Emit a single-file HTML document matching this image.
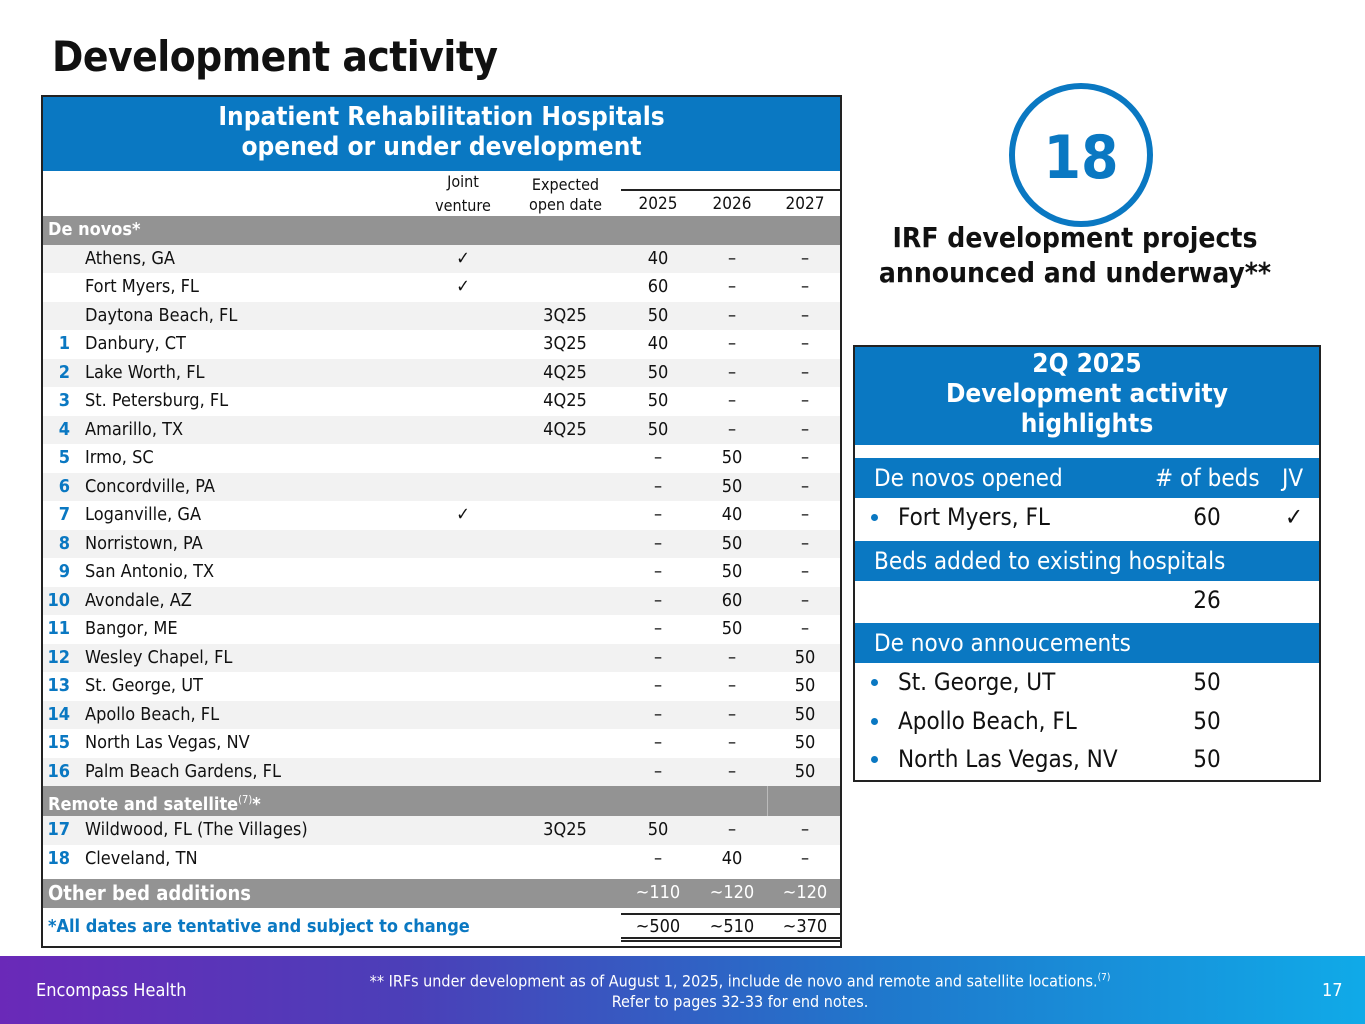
<!DOCTYPE html>
<html><head><meta charset="utf-8"><style>
*{margin:0;padding:0;box-sizing:border-box}
body{width:1365px;height:1024px;position:relative;background:#fff;font-family:"DejaVu Sans Condensed","DejaVu Sans","Liberation Sans",sans-serif;color:#111;overflow:hidden}
.a{position:absolute}
.title{left:52px;top:32px;font-size:42px;font-weight:bold;letter-spacing:-0.5px}
.tbl{left:41px;top:95px;width:801px;height:853px;border:2px solid #222;border-top-width:2px}
.hdr{left:0;top:0;width:797px;height:74px;background:#0a78c2;color:#fff;font-size:26px;font-weight:bold;text-align:center;line-height:30px;padding-top:5px}
.row{position:absolute;left:0;width:797px;height:28.5px;font-size:18px;line-height:28px}
.g{background:#f2f2f2}
.sec{background:#939393;color:#fff;font-weight:bold}
.row span{position:absolute;top:0}
.n{left:0;width:27px;text-align:right;color:#0a78c2;font-weight:bold}
.nm{left:42px}
.jv{left:400px;width:40px;text-align:center}
.dt{left:482px;width:80px;text-align:center}
.c1{left:585px;width:60px;text-align:center}
.c2{left:659px;width:60px;text-align:center}
.c3{left:732px;width:60px;text-align:center}
.ch{font-size:16px;text-align:center;line-height:20px}
.rp{left:853px;top:345px;width:468px;height:437px;border:2px solid #222}
.rh{left:0;top:0;width:464px;height:98px;background:#0a78c2;color:#fff;font-size:26px;font-weight:bold;text-align:center;line-height:30px;padding-top:2px}
.rb{position:absolute;left:0;width:464px;background:#0a78c2;color:#fff;font-size:24px;height:40px;line-height:40px;padding-left:19px}
.rw{position:absolute;left:0;width:464px;font-size:24px;height:39px;line-height:39px}
.rw .b{position:absolute;left:16px;top:16px;width:7px;height:7px;border-radius:50%;background:#0a78c2}
.rw .t{position:absolute;left:43px}
.rw .v{position:absolute;left:330px;width:44px;text-align:center}
.foot{left:0;top:956px;width:1365px;height:68px;background:linear-gradient(90deg,#6a29b8 0%,#4b3fb8 30%,#1f78cc 65%,#10aae8 100%);color:#fff}
</style></head><body>
<div class="a title">Development activity</div>
<div class="a tbl">
 <div class="a hdr">Inpatient Rehabilitation Hospitals<br>opened or under development</div>
 <div class="a ch" style="left:385px;top:75px;width:70px">Joint<br><span style="line-height:28px">venture</span></div>
 <div class="a ch" style="left:475px;top:78px;width:95px">Expected<br>open date</div>
 <div class="a" style="left:578px;top:92px;width:219px;border-top:2px solid #222"></div>
 <div class="a ch" style="left:585px;top:97px;width:60px;font-size:17px">2025</div>
 <div class="a ch" style="left:659px;top:97px;width:60px;font-size:17px">2026</div>
 <div class="a ch" style="left:732px;top:97px;width:60px;font-size:17px">2027</div>
 <div class="row sec" style="top:119px"><span style="left:5px">De novos*</span></div>
 <div class="row g" style="top:147.5px"><span class="nm">Athens, GA</span><span class="jv">✓</span><span class="c1">40</span><span class="c2">–</span><span class="c3">–</span></div>
 <div class="row" style="top:176px"><span class="nm">Fort Myers, FL</span><span class="jv">✓</span><span class="c1">60</span><span class="c2">–</span><span class="c3">–</span></div>
 <div class="row g" style="top:204.5px"><span class="nm">Daytona Beach, FL</span><span class="dt">3Q25</span><span class="c1">50</span><span class="c2">–</span><span class="c3">–</span></div>
 <div class="row" style="top:233px"><span class="n">1</span><span class="nm">Danbury, CT</span><span class="dt">3Q25</span><span class="c1">40</span><span class="c2">–</span><span class="c3">–</span></div>
 <div class="row g" style="top:261.5px"><span class="n">2</span><span class="nm">Lake Worth, FL</span><span class="dt">4Q25</span><span class="c1">50</span><span class="c2">–</span><span class="c3">–</span></div>
 <div class="row" style="top:290px"><span class="n">3</span><span class="nm">St. Petersburg, FL</span><span class="dt">4Q25</span><span class="c1">50</span><span class="c2">–</span><span class="c3">–</span></div>
 <div class="row g" style="top:318.5px"><span class="n">4</span><span class="nm">Amarillo, TX</span><span class="dt">4Q25</span><span class="c1">50</span><span class="c2">–</span><span class="c3">–</span></div>
 <div class="row" style="top:347px"><span class="n">5</span><span class="nm">Irmo, SC</span><span class="c1">–</span><span class="c2">50</span><span class="c3">–</span></div>
 <div class="row g" style="top:375.5px"><span class="n">6</span><span class="nm">Concordville, PA</span><span class="c1">–</span><span class="c2">50</span><span class="c3">–</span></div>
 <div class="row" style="top:404px"><span class="n">7</span><span class="nm">Loganville, GA</span><span class="jv">✓</span><span class="c1">–</span><span class="c2">40</span><span class="c3">–</span></div>
 <div class="row g" style="top:432.5px"><span class="n">8</span><span class="nm">Norristown, PA</span><span class="c1">–</span><span class="c2">50</span><span class="c3">–</span></div>
 <div class="row" style="top:461px"><span class="n">9</span><span class="nm">San Antonio, TX</span><span class="c1">–</span><span class="c2">50</span><span class="c3">–</span></div>
 <div class="row g" style="top:489.5px"><span class="n">10</span><span class="nm">Avondale, AZ</span><span class="c1">–</span><span class="c2">60</span><span class="c3">–</span></div>
 <div class="row" style="top:518px"><span class="n">11</span><span class="nm">Bangor, ME</span><span class="c1">–</span><span class="c2">50</span><span class="c3">–</span></div>
 <div class="row g" style="top:546.5px"><span class="n">12</span><span class="nm">Wesley Chapel, FL</span><span class="c1">–</span><span class="c2">–</span><span class="c3">50</span></div>
 <div class="row" style="top:575px"><span class="n">13</span><span class="nm">St. George, UT</span><span class="c1">–</span><span class="c2">–</span><span class="c3">50</span></div>
 <div class="row g" style="top:603.5px"><span class="n">14</span><span class="nm">Apollo Beach, FL</span><span class="c1">–</span><span class="c2">–</span><span class="c3">50</span></div>
 <div class="row" style="top:632px"><span class="n">15</span><span class="nm">North Las Vegas, NV</span><span class="c1">–</span><span class="c2">–</span><span class="c3">50</span></div>
 <div class="row g" style="top:660.5px"><span class="n">16</span><span class="nm">Palm Beach Gardens, FL</span><span class="c1">–</span><span class="c2">–</span><span class="c3">50</span></div>
 <div class="row sec" style="top:689px;height:30px"><span style="left:5px">Remote and satellite<sup style="font-size:11px;font-weight:normal">(7)</sup>*</span><span style="left:724px;top:0;height:30px;border-left:1px solid #bbb"></span></div>
 <div class="row g" style="top:719px"><span class="n">17</span><span class="nm">Wildwood, FL (The Villages)</span><span class="dt">3Q25</span><span class="c1">50</span><span class="c2">–</span><span class="c3">–</span></div>
 <div class="row" style="top:748px"><span class="n">18</span><span class="nm">Cleveland, TN</span><span class="c1">–</span><span class="c2">40</span><span class="c3">–</span></div>
 <div class="row sec" style="top:782px;height:29px;font-size:20px"><span style="left:5px">Other bed additions</span><span class="c1" style="font-weight:normal;font-size:18px">~110</span><span class="c2" style="font-weight:normal;font-size:18px">~120</span><span class="c3" style="font-weight:normal;font-size:18px">~120</span></div>
 <div class="a" style="left:578px;top:816px;width:219px;border-top:2px solid #222"></div>
 <div class="row" style="top:816px;color:#0a78c2;font-weight:bold"><span style="left:5px">*All dates are tentative and subject to change</span><span class="c1" style="color:#111;font-weight:normal">~500</span><span class="c2" style="color:#111;font-weight:normal">~510</span><span class="c3" style="color:#111;font-weight:normal">~370</span></div>
 <div class="a" style="left:578px;top:840px;width:219px;height:5px;border-top:2px solid #222;border-bottom:2px solid #222"></div>
</div>

<svg class="a" style="left:1005px;top:80px" width="152" height="152"><circle cx="76" cy="75" r="69" fill="none" stroke="#0a78c2" stroke-width="6"/><text x="76" y="98" text-anchor="middle" font-family="DejaVu Sans Condensed, DejaVu Sans, sans-serif" font-weight="bold" font-size="60" fill="#0a78c2">18</text></svg>
<div class="a" style="left:860px;top:220px;width:430px;text-align:center;font-size:28px;font-weight:bold;line-height:35px">IRF development projects<br>announced and underway**</div>

<div class="a rp">
 <div class="a rh">2Q 2025<br>Development activity<br>highlights</div>
 <div class="rb" style="top:111px">De novos opened<span style="position:absolute;left:300px">#&nbsp;of beds</span><span style="position:absolute;left:427px">JV</span></div>
 <div class="rw" style="top:151px"><span class="b"></span><span class="t">Fort Myers, FL</span><span class="v">60</span><span style="position:absolute;left:430px;font-weight:bold">✓</span></div>
 <div class="rb" style="top:194px">Beds added to existing hospitals</div>
 <div class="rw" style="top:234px"><span class="v">26</span></div>
 <div class="rb" style="top:276px">De novo annoucements</div>
 <div class="rw" style="top:316px"><span class="b"></span><span class="t">St. George, UT</span><span class="v">50</span></div>
 <div class="rw" style="top:355px"><span class="b"></span><span class="t">Apollo Beach, FL</span><span class="v">50</span></div>
 <div class="rw" style="top:393px"><span class="b"></span><span class="t">North Las Vegas, NV</span><span class="v">50</span></div>
</div>

<div class="a foot">
 <div class="a" style="left:36px;top:24px;font-size:18px">Encompass Health</div>
 <div class="a" style="left:340px;top:11px;width:800px;text-align:center;font-size:16px;line-height:21px">** IRFs under development as of August 1, 2025, include de novo and remote and satellite locations.<sup style="font-size:10px">(7)</sup><br>Refer to pages 32-33 for end notes.</div>
 <div class="a" style="left:1322px;top:24px;font-size:18px">17</div>
</div>
</body></html>
